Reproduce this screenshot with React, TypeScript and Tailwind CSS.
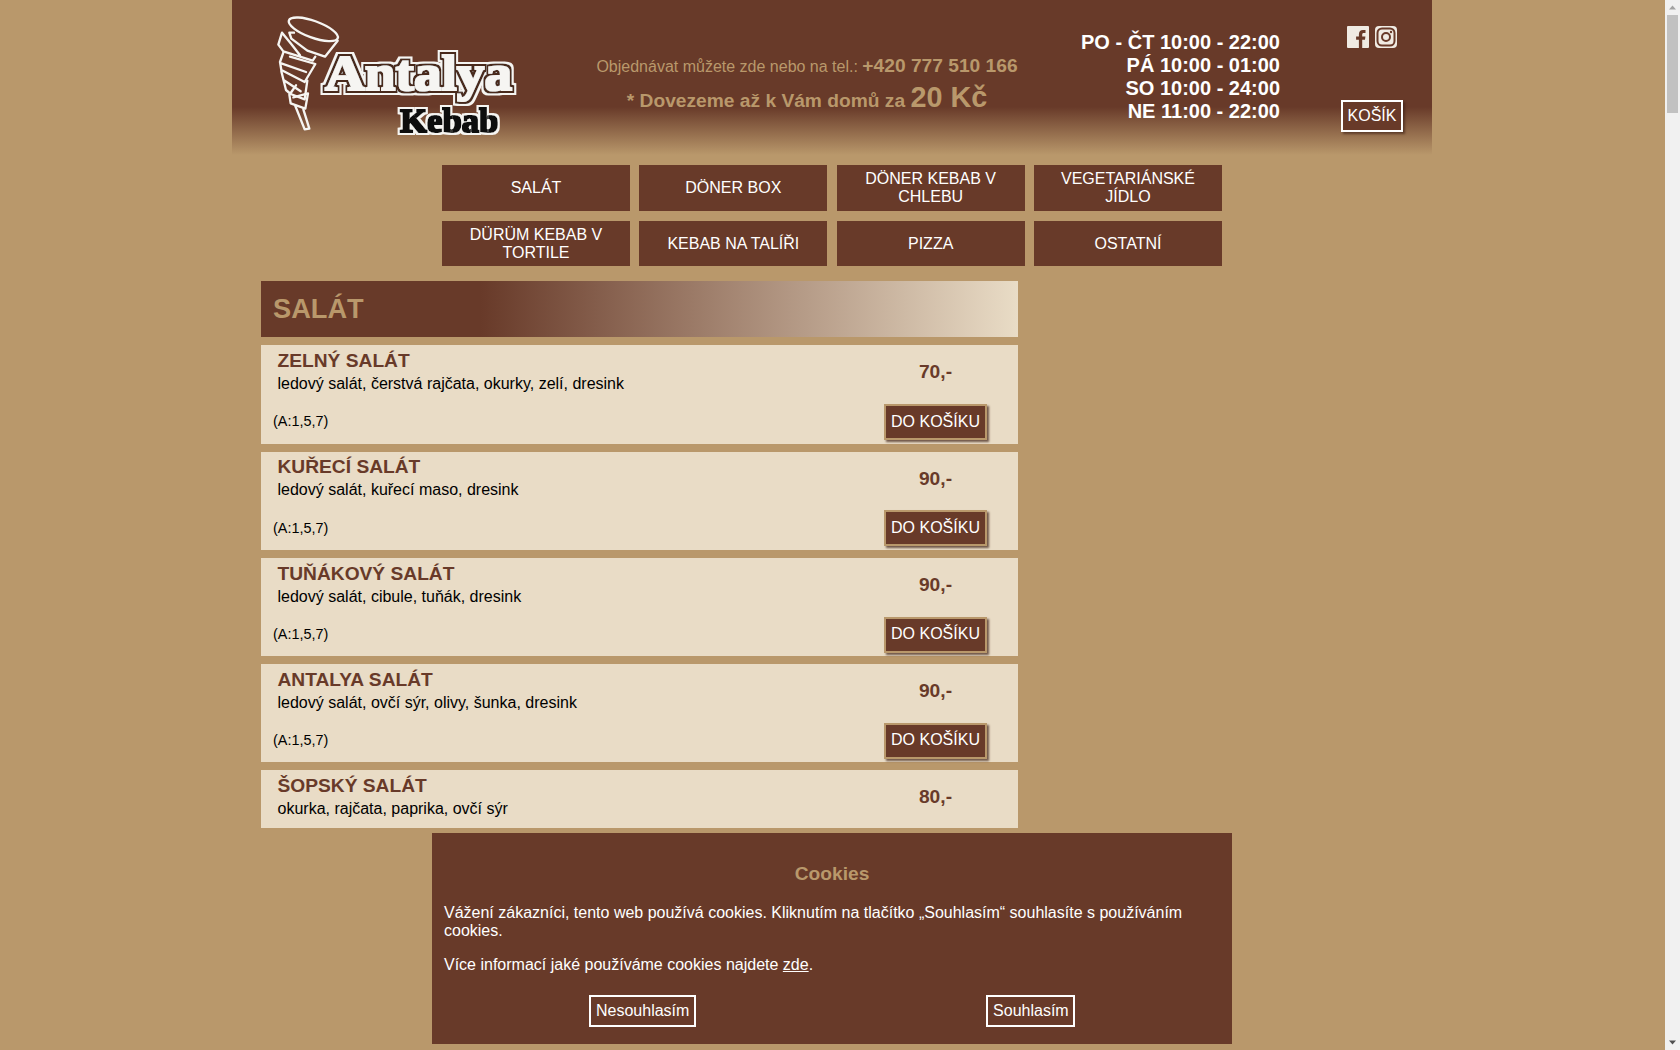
const F = '[font-family:"Liberation_Sans",Arial,sans-serif]';

function Logo() {
  return (
    <svg width="260" height="130" viewBox="0 0 780 390" className="block shrink-0">
      <defs>
        <filter id="haloA" x="-8%" y="-20%" width="116%" height="140%">
          <feMorphology in="SourceAlpha" operator="dilate" radius="14" result="o" />
          <feFlood floodColor="#f6f5f2" />
          <feComposite in2="o" operator="in" result="halo" />
          <feMorphology in="SourceAlpha" operator="dilate" radius="8" result="m" />
          <feFlood floodColor="#4a2c1e" />
          <feComposite in2="m" operator="in" result="dark" />
          <feMorphology in="SourceAlpha" operator="dilate" radius="4" result="c" />
          <feFlood floodColor="#f6f5f2" />
          <feComposite in2="c" operator="in" result="core" />
          <feMerge>
            <feMergeNode in="halo" />
            <feMergeNode in="dark" />
            <feMergeNode in="core" />
          </feMerge>
          <feGaussianBlur stdDeviation="1.200" />
        </filter>
        <filter id="haloK" x="-8%" y="-20%" width="116%" height="140%">
          <feMorphology in="SourceAlpha" operator="dilate" radius="8" result="o" />
          <feFlood floodColor="#f6f5f2" />
          <feComposite in2="o" operator="in" result="halo" />
          <feMorphology in="SourceAlpha" operator="dilate" radius="1.500" result="c" />
          <feFlood floodColor="#0a0a0a" />
          <feComposite in2="c" operator="in" result="core" />
          <feMerge>
            <feMergeNode in="halo" />
            <feMergeNode in="core" />
          </feMerge>
          <feGaussianBlur stdDeviation="1" />
        </filter>
      </defs>
      <g fill="none" stroke="#f6f5f2" strokeWidth="7" strokeLinejoin="round" strokeLinecap="round">
        <ellipse cx="130" cy="58" rx="78" ry="25" transform="rotate(20 130 58)" />
        <path d="M72,68 L58,68 L64,86 L112,122 L165,140 L203,92" />
        <path d="M36,68 L25,104 L40,124 L128,152 L136,140 M36,68 L62,100 L90,136" />
        <path d="M40,128 L30,156 L34,180 L104,216 L136,162 L60,140 M34,160 L108,186" />
        <path d="M34,184 L48,240 L62,252 L104,268 L112,212 M44,212 L92,244 M60,252 L78,226" />
        <path d="M58,254 L62,280 L106,296 L114,250 L70,262" />
        <path d="M76,288 L104,358 L118,356 L100,298" />
      </g>
      <text x="165" y="241" textLength="561" lengthAdjust="spacingAndGlyphs" filter="url(#haloA)" fontFamily="Liberation Serif, serif" fontWeight="700" fontSize="150" fill="#f6f5f2">Antalya</text>
      <text x="390" y="366" textLength="295" lengthAdjust="spacingAndGlyphs" filter="url(#haloK)" fontFamily="Liberation Serif, serif" fontWeight="700" fontSize="100" fill="#0a0a0a">Kebab</text>
    </svg>
  );
}

function Item({ name, desc, price, allergen = true }: { name: string; desc: string; price: string; allergen?: boolean }) {
  return (
    <div className={"bg-[#e9dcc6] " + (allergen ? "h-[98.3px]" : "h-[57.4px]")}>
      <div className="flex h-[57px] justify-between">
        <div className="pl-[16.5px] pt-[4.8px]">
          <div className="text-[19.2px] font-bold leading-[22px] text-[#683a29]">{name}</div>
          <div className="text-[16px] leading-[18px] mt-[3px] text-black">{desc}</div>
        </div>
        <div className="w-[103px] mr-[31px] pt-[15px] text-center text-[19.2px] font-bold leading-[24px] text-[#683a29]">{price}</div>
      </div>
      {allergen && (
        <div className="flex justify-between items-start">
          <div className="pl-[12px] pt-[10px] text-[14.4px] leading-[18px] text-black">(A:1,5,7)</div>
          <button className="w-[103px] h-[36px] mr-[31px] mt-[1.8px] pb-[1px] border-2 border-[#b9986b] bg-[#683a29] text-white text-[16px] leading-[18px] shadow-[2px_2px_2px_rgba(60,30,20,0.7)]">DO KOŠÍKU</button>
        </div>
      )}
    </div>
  );
}

const nav = ["SALÁT", "DÖNER BOX", "DÖNER KEBAB V CHLEBU", "VEGETARIÁNSKÉ JÍDLO", "DÜRÜM KEBAB V TORTILE", "KEBAB NA TALÍŘI", "PIZZA", "OSTATNÍ"];
const items = [
  ["ZELNÝ SALÁT", "ledový salát, čerstvá rajčata, okurky, zelí, dresink", "70,-"],
  ["KUŘECÍ SALÁT", "ledový salát, kuřecí maso, dresink", "90,-"],
  ["TUŇÁKOVÝ SALÁT", "ledový salát, cibule, tuňák, dresink", "90,-"],
  ["ANTALYA SALÁT", "ledový salát, ovčí sýr, olivy, šunka, dresink", "90,-"],
];

export default function App() {
  return (
    <div className={F + " flex h-[1050px] overflow-hidden bg-[#b9986b] text-[16px]"}>
      <div className="flex-1 min-w-0">
        <div className="w-[1200px] ml-[232px]">
          <header className="h-[155px] flex bg-[linear-gradient(180deg,#683a29_69%,#b9986b_100%)]">
            <div className="ml-[38px] mt-[10px]"><Logo /></div>
            <div className="w-[490px] ml-[32px] pt-[54px] text-center text-[#b9986b]">
              <div className="leading-[24px]">Objednávat můžete zde nebo na tel.: <b className="text-[19.2px]">+420 777 510 166</b></div>
              <div className="leading-[36px] mt-[0px] font-bold text-[19.2px]">* Dovezeme až k Vám domů za <span className="text-[28.8px]">20 Kč</span></div>
            </div>
            <div className="w-[228px] pt-[31px] text-right text-white font-bold text-[20px] leading-[23px]">
              <div>PO - ČT 10:00 - 22:00</div>
              <div>PÁ 10:00 - 01:00</div>
              <div>SO 10:00 - 24:00</div>
              <div>NE 11:00 - 22:00</div>
            </div>
            <div className="pl-[61px] pt-[26px]">
              <div className="flex gap-[6px] ml-[6px] h-[22px]">
                <svg width="22" height="22" viewBox="0 0 22 22">
                  <rect width="22" height="22" rx="1" fill="#f0ebe3" />
                  <path d="M15.2 22v-8.2h2.8l.4-3.2h-3.2V8.6c0-.9.3-1.6 1.6-1.6h1.7V4.100c-.3 0-1.300-.1-2.500-.1-2.500 0-4.100 1.500-4.100 4.200v2.400H9.100v3.200h2.800V22z" fill="#683a29" />
                </svg>
                <svg width="22" height="22" viewBox="0 0 22 22">
                  <rect width="22" height="22" rx="4" fill="#f0ebe3" />
                  <rect x="2.500" y="2.500" width="17" height="17" rx="4.500" fill="none" stroke="#683a29" strokeWidth="2" />
                  <circle cx="11" cy="11" r="4" fill="none" stroke="#683a29" strokeWidth="2" />
                  <circle cx="16" cy="6" r="1.200" fill="#683a29" />
                </svg>
              </div>
              <button className="mt-[52px] h-[32px] w-[62px] border-2 border-white bg-[#683a29] text-white text-[16px] shadow-[2px_2px_2px_rgba(60,30,20,0.6)]">KOŠÍK</button>
            </div>
          </header>

          <nav className="mx-auto mt-[10px] w-[780px] grid grid-cols-4 gap-x-[9.33px] gap-y-[10px]">
            {nav.map((n, i) => (
              <a key={n} className={"flex items-center justify-center px-[16px] bg-[#683a29] text-white text-center leading-[18px] " + (i < 4 ? "h-[46px]" : "h-[45px]")}>{n}</a>
            ))}
          </nav>

          <main className="ml-[29px] mt-[15px] w-[757px]">
            <h1 className="h-[56.3px] pl-[12px] flex items-center text-[27.2px] font-bold text-[#b9986b] bg-[linear-gradient(90deg,#683a29_29%,#e9dcc6_100%)]">SALÁT</h1>
            <div className="mt-[8px] flex flex-col gap-[8px]">
              {items.map(([a, b, c]) => <Item key={a} name={a} desc={b} price={c} />)}
              <Item name="ŠOPSKÝ SALÁT" desc="okurka, rajčata, paprika, ovčí sýr" price="80,-" allergen={false} />
            </div>
          </main>
        </div>
      </div>

      <div className="w-[15px] shrink-0 h-full bg-[#f1f1f1] flex flex-col items-center">
        <svg width="9" height="15" viewBox="0 0 9 15" className="shrink-0"><path d="M4.500 5.500 L8 9.500 H1 Z" fill="#a3a3a3" /></svg>
        <div className="w-[11px] h-[98px] bg-[#c1c1c1]" />
        <div className="flex-1" />
        <svg width="9" height="15" viewBox="0 0 9 15" className="shrink-0"><path d="M1 5.500 H8 L4.500 9.500 Z" fill="#505050" /></svg>
      </div>

      <div className="fixed left-[432px] bottom-[6px] w-[800px] h-[211px] bg-[#683a29] text-white px-[12px] pt-[30px]">
        <div className="text-center font-bold text-[19.2px] leading-[22px] text-[#b9986b]">Cookies</div>
        <p className="mt-[19px] leading-[18px]">Vážení zákazníci, tento web používá cookies. Kliknutím na tlačítko „Souhlasím“ souhlasíte s používáním cookies.</p>
        <p className="mt-[16px] leading-[18px]">Více informací jaké používáme cookies najdete <u>zde</u>.</p>
        <div className="flex ml-[145px] mt-[21px] gap-[290px]">
          <button className="h-[32px] px-[5px] border-2 border-white">Nesouhlasím</button>
          <button className="h-[32px] w-[89px] border-2 border-white">Souhlasím</button>
        </div>
      </div>
    </div>
  );
}
